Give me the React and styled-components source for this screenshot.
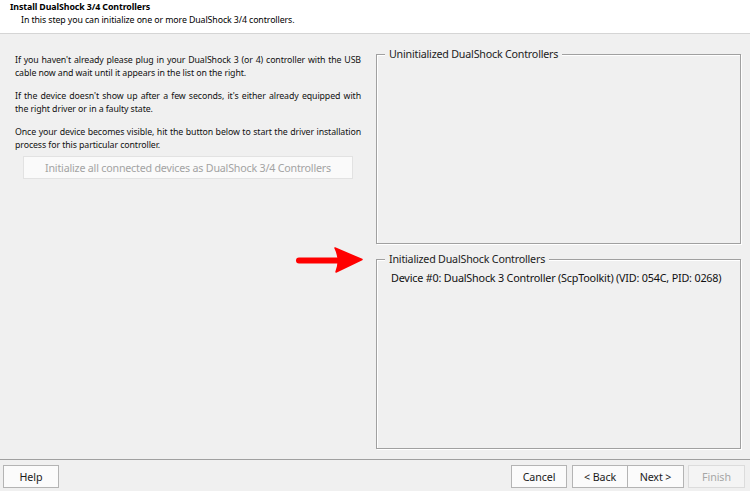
import React from "react";
import styled, { createGlobalStyle } from "styled-components";

const Global = createGlobalStyle`
  html, body { margin: 0; padding: 0; background: #f0f0f0; }
  body { font-family: "Noto Sans", "Open Sans", Arial, sans-serif; color: #000; }
  * { box-sizing: border-box; }
`;

const Window = styled.div`
  width: 750px;
  height: 491px;
  display: flex;
  flex-direction: column;
  background: #f0f0f0;
  overflow: hidden;
`;

const Header = styled.header`
  height: 34px;
  background: #fff;
  border-bottom: 1px solid #d5d5d5;
  padding: 1px 0 0 10px;
  flex: none;
`;

const Title = styled.div`
  font-size: 8.8px;
  font-weight: 700;
  line-height: 13px;
  letter-spacing: -0.1px;
`;

const Subtitle = styled.div`
  font-size: 8.8px;
  line-height: 13px;
  padding-left: 11px;
  letter-spacing: -0.1px;
`;

const Main = styled.main`
  position: relative;
  flex: 1;
  display: flex;
  gap: 15px;
  padding: 20px 9px 10px 15px;
  min-height: 0;
`;

const LeftColumn = styled.section`
  width: 346px;
  flex: none;
  display: flex;
  flex-direction: column;
`;

const Para = styled.p`
  margin: 0 0 10px;
  font-size: 8.8px;
  line-height: 13px;
  text-align: justify;
  letter-spacing: -0.1px;
  color: #111;
`;

const WideButton = styled.button`
  margin: -6px 0 0 8px;
  width: 330px;
  height: 23px;
  border: 1px solid #e2e2e2;
  background: #fafafa;
  color: #a3a3a3;
  font-family: inherit;
  font-size: 10.7px;
  letter-spacing: -0.2px;
  padding: 0;
`;

const RightColumn = styled.section`
  width: 365px;
  flex: none;
  display: flex;
  flex-direction: column;
  gap: 15px;
`;

const Group = styled.div`
  position: relative;
  flex: 1;
  border: 1px solid #a0a0a0;
  box-shadow: 1px 1px 0 #fff, inset 1px 1px 0 #fff;
  padding: 11px 14px;
`;

const Caption = styled.span`
  position: absolute;
  top: -8px;
  left: 8px;
  padding: 0 4px;
  background: #f0f0f0;
  font-size: 10.7px;
  line-height: 14px;
  color: #222;
  letter-spacing: -0.2px;
`;

const Item = styled.div`
  font-size: 10.8px;
  line-height: 14px;
  color: #111;
  letter-spacing: -0.2px;
  white-space: nowrap;
`;

const Arrow = styled.svg`
  position: absolute;
  left: 295px;
  top: 212px;
`;

const Footer = styled.footer`
  flex: none;
  height: 32px;
  border-top: 1px solid #a0a0a0;
  display: flex;
  justify-content: space-between;
  align-items: flex-start;
  padding: 5px 5px 0 3px;
`;

const NavGroup = styled.div`
  display: flex;
  gap: ${(p) => p.$gap || 0}px;
`;

const Btn = styled.button`
  width: ${(p) => p.$w || 56}px;
  height: 23px;
  margin-left: ${(p) => p.$ml || 0}px;
  margin-right: ${(p) => p.$mr || 0}px;
  border: 1px solid ${(p) => (p.disabled ? "#dcdcdc" : "#b4b4b4")};
  background: ${(p) => (p.disabled ? "#f4f4f4" : "#fbfbfb")};
  color: ${(p) => (p.disabled ? "#a6a6a6" : "#1a1a1a")};
  font-family: inherit;
  font-size: 10.7px;
  letter-spacing: -0.1px;
  padding: 0;
`;

export default function App() {
  return (
    <Window>
      <Global />
      <Header>
        <Title>Install DualShock 3/4 Controllers</Title>
        <Subtitle>In this step you can initialize one or more DualShock 3/4 controllers.</Subtitle>
      </Header>
      <Main>
        <LeftColumn>
          <Para>
            If you haven't already please plug in your DualShock 3 (or 4) controller with the USB
            cable now and wait until it appears in the list on the right.
          </Para>
          <Para>
            If the device doesn't show up after a few seconds, it's either already equipped with the
            right driver or in a faulty state.
          </Para>
          <Para>
            Once your device becomes visible, hit the button below to start the driver installation
            process for this particular controller.
          </Para>
          <WideButton disabled>Initialize all connected devices as DualShock 3/4 Controllers</WideButton>
        </LeftColumn>
        <RightColumn>
          <Group>
            <Caption>Uninitialized DualShock Controllers</Caption>
          </Group>
          <Group>
            <Caption>Initialized DualShock Controllers</Caption>
            <Item>Device #0: DualShock 3 Controller (ScpToolkit) (VID: 054C, PID: 0268)</Item>
          </Group>
        </RightColumn>
        <Arrow width="70" height="28" viewBox="0 0 70 28">
          <line x1="4" y1="14.5" x2="46" y2="14.5" stroke="#ff0000" strokeWidth="6" strokeLinecap="round" />
          <path d="M40 2 L67 13.5 L41 26 Q46 14 40 2 Z" fill="#ff0000" stroke="#ff0000" strokeWidth="1.5" strokeLinejoin="round" />
        </Arrow>
      </Main>
      <Footer>
        <Btn>Help</Btn>
        <NavGroup $gap={4}>
          <Btn $w={56} $mr={1}>Cancel</Btn>
          <NavGroup>
            <Btn $w={56}>&lt; Back</Btn>
            <Btn $w={57} $ml={-1}>Next &gt;</Btn>
          </NavGroup>
          <Btn $w={57} disabled>Finish</Btn>
        </NavGroup>
      </Footer>
    </Window>
  );
}
